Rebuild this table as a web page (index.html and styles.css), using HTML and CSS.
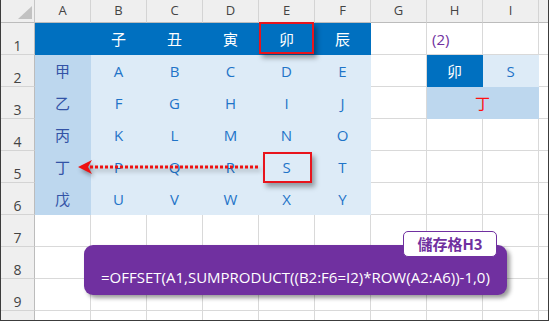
FILE: index.html
```html
<!DOCTYPE html>
<html lang="zh-Hant">
<head>
<meta charset="utf-8">
<title>OFFSET SUMPRODUCT</title>
<link rel="stylesheet" href="styles.css">
</head>
<body>
<div class="sheet">
  <div class="corner"><span class="tri"></span></div>
  <div class="ch">A</div><div class="ch">B</div><div class="ch">C</div><div class="ch">D</div><div class="ch">E</div><div class="ch">F</div><div class="ch">G</div><div class="ch">H</div><div class="ch">I</div><div class="ch last"></div>

  <div class="rh">1</div>
  <div class="c hd"></div><div class="c hd">子</div><div class="c hd">丑</div><div class="c hd">寅</div><div class="c hd">卯</div><div class="c hd">辰</div>
  <div class="c"></div><div class="c note">(2)</div><div class="c"></div><div class="c last"></div>

  <div class="rh">2</div>
  <div class="c side">甲</div><div class="c lt">A</div><div class="c lt">B</div><div class="c lt">C</div><div class="c lt">D</div><div class="c lt">E</div>
  <div class="c"></div><div class="c hd">卯</div><div class="c lt">S</div><div class="c last"></div>

  <div class="rh">3</div>
  <div class="c side">乙</div><div class="c lt">F</div><div class="c lt">G</div><div class="c lt">H</div><div class="c lt">I</div><div class="c lt">J</div>
  <div class="c"></div><div class="c mid result">丁</div><div class="c last"></div>

  <div class="rh">4</div>
  <div class="c side">丙</div><div class="c lt">K</div><div class="c lt">L</div><div class="c lt">M</div><div class="c lt">N</div><div class="c lt">O</div>
  <div class="c"></div><div class="c"></div><div class="c"></div><div class="c last"></div>

  <div class="rh">5</div>
  <div class="c side">丁</div><div class="c lt">P</div><div class="c lt">Q</div><div class="c lt">R</div><div class="c lt">S</div><div class="c lt">T</div>
  <div class="c"></div><div class="c"></div><div class="c"></div><div class="c last"></div>

  <div class="rh">6</div>
  <div class="c side">戊</div><div class="c lt">U</div><div class="c lt">V</div><div class="c lt">W</div><div class="c lt">X</div><div class="c lt">Y</div>
  <div class="c"></div><div class="c"></div><div class="c"></div><div class="c last"></div>

  <div class="rh">7</div>
  <div class="c"></div><div class="c"></div><div class="c"></div><div class="c"></div><div class="c"></div><div class="c"></div><div class="c"></div><div class="c"></div><div class="c"></div><div class="c last"></div>

  <div class="rh">8</div>
  <div class="c"></div><div class="c"></div><div class="c"></div><div class="c"></div><div class="c"></div><div class="c"></div><div class="c"></div><div class="c"></div><div class="c"></div><div class="c last"></div>

  <div class="rh">9</div>
  <div class="c"></div><div class="c"></div><div class="c"></div><div class="c"></div><div class="c"></div><div class="c"></div><div class="c"></div><div class="c"></div><div class="c"></div><div class="c last"></div>

  <div class="rh end"></div>
  <div class="c end"></div><div class="c end"></div><div class="c end"></div><div class="c end"></div><div class="c end"></div><div class="c end"></div><div class="c end"></div><div class="c end"></div><div class="c end"></div><div class="c last end"></div>

  <div class="mark mark-e1"></div>
  <div class="mark mark-e5"></div>

  <svg class="arrow" width="195" height="25" viewBox="0 0 195 25">
    <line x1="20" y1="12" x2="189" y2="12" stroke="#ee1111" stroke-width="3" stroke-dasharray="3 2"/>
    <path d="M8 12 L22 5 L18 12 L22 19 Z" fill="#ee1111"/>
  </svg>

  <div class="formula">
    <span class="formula-text">=OFFSET(A1,SUMPRODUCT((B2:F6=I2)*ROW(A2:A6))-1,0)</span>
    <span class="tag">儲存格H3</span>
  </div>
</div>
</body>
</html>
```

FILE: styles.css
```css
* { box-sizing: border-box; }
html, body { margin: 0; padding: 0; background: #fff; }
body { font-family: "Open Sans", "Noto Sans CJK TC", sans-serif; }

.sheet {
  position: relative;
  width: 549px;
  height: 321px;
  display: grid;
  grid-template-columns: 34px repeat(9, 56px) 9px;
  grid-template-rows: 23px repeat(9, 32px) 9px;
  border-left: 1px solid #3c3c3c;
  border-right: 1px solid #3c3c3c;
  border-bottom: 1px solid #3c3c3c;
  overflow: hidden;
}

.corner {
  background: #efefef;
  border-right: 1px solid #c6c6c6;
  border-bottom: 1px solid #bcbcbc;
  display: flex;
  justify-content: flex-end;
  align-items: flex-end;
  padding: 0 2px 3px 0;
}
.tri {
  width: 0;
  height: 0;
  border-left: 14px solid transparent;
  border-bottom: 13px solid #c2c2c2;
}

.ch {
  background: #efefef;
  border-right: 1px solid #d4d4d4;
  border-bottom: 1px solid #bcbcbc;
  color: #444;
  font-size: 13px;
  display: flex;
  justify-content: center;
  align-items: center;
  padding-bottom: 3px;
  line-height: 16px;
}

.rh {
  background: #efefef;
  border-right: 1px solid #bcbcbc;
  border-bottom: 1px solid #d4d4d4;
  color: #444;
  font-size: 14px;
  line-height: 16px;
  display: flex;
  justify-content: center;
  align-items: flex-end;
}

.c {
  border-right: 1px solid #d9d9d9;
  border-bottom: 1px solid #d9d9d9;
  display: flex;
  justify-content: center;
  align-items: center;
  font-size: 15px;
  line-height: 20px;
}
.last { border-right: none; }
.end { border-bottom: none; }

.hd { background: #0070c0; border-color: transparent; color: #fff; font-family: "Noto Sans CJK TC", sans-serif; }
.lt { background: #ddebf7; border-color: transparent; color: #1f74c8; }
.side { background: #bdd7ee; border-color: transparent; color: #3353a6; font-family: "Noto Sans CJK TC", sans-serif; }
.mid { background: #bdd7ee; border-color: transparent; }
.result { grid-column: span 2; color: #ff1010; font-family: "Noto Sans CJK TC", sans-serif; }
.note { justify-content: flex-start; padding-left: 5px; color: #7030a0; }

.mark {
  position: absolute;
  border: 2px solid #e8141c;
  box-shadow: 3px 4px 5px rgba(0, 0, 0, 0.35);
}
.mark-e1 { left: 258px; top: 22px; width: 55px; height: 32px; }
.mark-e5 { left: 262px; top: 152px; width: 49px; height: 31px; }

.arrow {
  position: absolute;
  left: 69px;
  top: 155px;
  filter: drop-shadow(2px 3px 2px rgba(0, 0, 0, 0.35));
}

.formula {
  position: absolute;
  left: 83px;
  top: 245px;
  width: 423px;
  height: 50px;
  background: #7030a0;
  border-radius: 9px;
  box-shadow: 3px 3px 4px rgba(0, 0, 0, 0.4);
  display: flex;
  align-items: center;
  padding: 14px 0 0 17px;
}
.formula-text {
  color: #fff;
  font-size: 15px;
  line-height: 20px;
  white-space: nowrap;
}
.tag {
  position: absolute;
  left: 319px;
  top: -14px;
  width: 94px;
  height: 26px;
  background: #fff;
  border: 1px solid #7030a0;
  border-radius: 5px;
  color: #7030a0;
  font-family: "Noto Sans CJK TC", sans-serif;
  font-weight: bold;
  font-size: 15px;
  line-height: 22px;
  display: flex;
  justify-content: center;
  align-items: center;
}
```
